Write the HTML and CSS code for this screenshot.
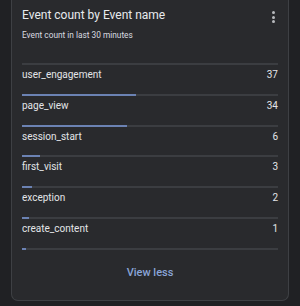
FILE: index.html
```html
<!DOCTYPE html>
<html lang="en">
<head>
    <meta charset="UTF-8">
    <title>Event count by Event name</title>
    <link rel="stylesheet" href="styles.css">
</head>
<body>
    <div class="card">
        <div class="card-header">
            <div>
                <div class="title">Event count by Event name</div>
                <div class="subtitle">Event count in last 30 minutes</div>
            </div>
            <div class="kebab"><span></span><span></span><span></span></div>
        </div>

        <div class="events">
            <div class="track"></div>
            <div class="row"><span>user_engagement</span><span>37</span></div>
            <div class="track"><div class="fill" style="width: 44.6%"></div></div>
            <div class="row"><span>page_view</span><span>34</span></div>
            <div class="track"><div class="fill" style="width: 41%"></div></div>
            <div class="row"><span>session_start</span><span>6</span></div>
            <div class="track"><div class="fill" style="width: 7.2%"></div></div>
            <div class="row"><span>first_visit</span><span>3</span></div>
            <div class="track"><div class="fill" style="width: 3.8%"></div></div>
            <div class="row"><span>exception</span><span>2</span></div>
            <div class="track"><div class="fill" style="width: 2.6%"></div></div>
            <div class="row"><span>create_content</span><span>1</span></div>
            <div class="track"><div class="fill" style="width: 1.4%"></div></div>
        </div>

        <div class="view-less">View less</div>
    </div>
</body>
</html>
```

FILE: styles.css
```css
body {
    margin: 0;
    background: #202124;
    font-family: Roboto, "Liberation Sans", sans-serif;
    color: #e3e5e8;
}
.card {
    margin-left: 11px;
    width: 256px;
    background: #292a2d;
    border: 1px solid #3e4044;
    border-top: none;
    border-radius: 0 0 7px 7px;
    padding: 7px 10px 20px 10px;
}
.card-header {
    display: flex;
    justify-content: space-between;
}
.title {
    font-size: 12px;
    line-height: 16px;
    color: #e8eaed;
}
.subtitle {
    margin-top: 6px;
    font-size: 8.3px;
    line-height: 12px;
    color: #dadce0;
}
.kebab {
    display: flex;
    flex-direction: column;
    gap: 1.5px;
    padding: 4px 3px 0 0;
}
.kebab span {
    width: 3px;
    height: 3px;
    border-radius: 50%;
    background: #b8babd;
}
.events {
    margin-top: 22px;
}
.track {
    height: 2px;
    background: #3b3d41;
}
.fill {
    height: 100%;
    background: #6b82b3;
}
.row {
    display: flex;
    justify-content: space-between;
    padding: 4px 0 12.8px 0;
    font-size: 10px;
    line-height: 12px;
}
.view-less {
    margin-top: 16px;
    text-align: center;
    font-size: 11px;
    line-height: 14px;
    font-weight: 500;
    color: #8aa5d8;
}
```
